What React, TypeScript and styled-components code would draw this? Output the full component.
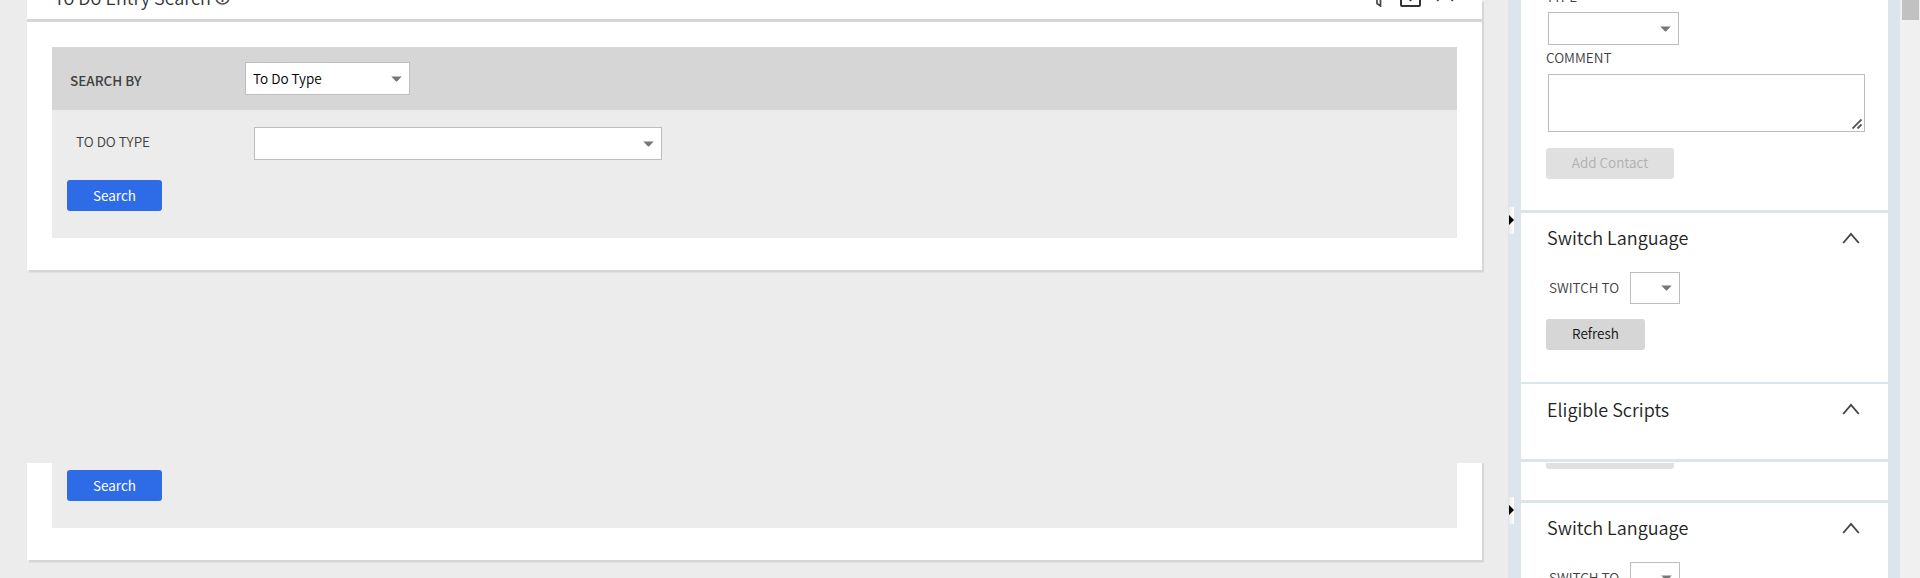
import React from "react";
import styled, { createGlobalStyle } from "styled-components";

const GlobalStyle = createGlobalStyle`
  * { box-sizing: border-box; }
  html, body { margin: 0; padding: 0; overflow: hidden; }
  body { background: #ececec; font-family: "Noto Sans CJK SC", "Noto Sans", sans-serif; font-weight: 350; color: #333; }
`;

const Page = styled.div`
  width: 1920px;
  height: 578px;
  display: flex;
  overflow: hidden;
`;

const Columns = styled.div`
  width: 1900px;
  display: flex;
  flex-direction: column;
`;

const Band = styled.div<{ $height: number }>`
  height: ${(p) => p.$height}px;
  flex: none;
  display: flex;
  overflow: hidden;
`;

const Scrolled = styled.div<{ $by: number }>`
  margin-top: -${(p) => p.$by}px;
  height: 463px;
  display: flex;
  flex: none;
`;

const Main = styled.main`
  width: 1508px;
  padding: 0 26px 0 27px;
  background: #ececec;
`;

const Card = styled.section`
  width: 1455px;
  height: 270px;
  background: #fff;
  box-shadow: 2px 2px 0 #d6d6d6, 2px 3px 0 #e2e2e2;
  display: flex;
  flex-direction: column;
`;

const CardHeader = styled.header`
  height: 22px;
  border-bottom: 3px solid #d6d6d6;
  padding: 0 28px 0 27px;
  display: flex;
  align-items: flex-start;
  overflow: hidden;
`;

const CardTitle = styled.div`
  font-size: 18px;
  line-height: 24px;
  margin-top: -15px;
  white-space: nowrap;
`;

const Glyph = styled.svg<{ $left?: number; $top?: number }>`
  display: block;
  flex: none;
  margin-left: ${(p) => p.$left ?? 0}px;
  margin-top: ${(p) => p.$top ?? 0}px;
`;

const HeaderTools = styled.div`
  margin-left: auto;
  display: flex;
`;

const Panel = styled.div`
  margin: 25px 25px 0;
  width: 1405px;
  background: #ececec;
  height: 191px;
`;

const SearchBar = styled.div`
  height: 63px;
  background: #d6d6d6;
  display: flex;
  align-items: flex-start;
  padding: 15px 0 0 18px;
`;

const FieldRow = styled.div`
  display: flex;
  align-items: flex-start;
  padding: 17px 0 0 24px;
  height: 70px;
`;

const Label = styled.label<{ $width?: number; $top?: number; $bold?: boolean }>`
  width: ${(p) => (p.$width ? `${p.$width}px` : "auto")};
  margin-top: ${(p) => p.$top ?? 0}px;
  font-size: 13.5px;
  line-height: 18px;
  font-weight: ${(p) => (p.$bold ? 500 : 350)};
  color: #404040;
  white-space: nowrap;
  flex: none;
`;

const SelectBox = styled.div<{ $width: number; $height?: number }>`
  width: ${(p) => p.$width}px;
  height: ${(p) => p.$height ?? 33}px;
  border: 1px solid #bdbdbd;
  background: #fff;
  display: flex;
  align-items: center;
  justify-content: space-between;
  padding: 0 7px;
  flex: none;
`;

const SelectValue = styled.span`
  font-size: 13.5px;
  line-height: 18px;
  padding-bottom: 2px;
  color: #000;
`;

const Button = styled.button<{ $width: number; $tone: "primary" | "plain" | "disabled" }>`
  display: flex;
  justify-content: center;
  width: ${(p) => p.$width}px;
  height: 31px;
  flex: none;
  border: 0;
  border-radius: 3px;
  padding: 0;
  font-family: inherit;
  font-size: 13.5px;
  line-height: ${(p) => (p.$tone === "primary" ? 31 : 29)}px;
  font-weight: ${(p) => (p.$tone === "primary" ? 400 : 350)};
  color: ${(p) => ({ primary: "#fff", plain: "#111", disabled: "#b0b0b0" })[p.$tone]};
  background: ${(p) => ({ primary: "#2e6be6", plain: "#d6d6d6", disabled: "#e0e0e0" })[p.$tone]};
`;

const PanelAction = styled.div`
  padding-left: 15px;
`;

const Splitter = styled.div`
  width: 13px;
  background: #dce5eb;
  padding: 207px 0 0 1px;
`;

const Handle = styled.div`
  width: 5px;
  height: 27px;
  background: linear-gradient(90deg, #ecebe4, #fff);
  padding-top: 8px;
`;

const Sidebar = styled.aside`
  width: 379px;
  border-right: 12px solid #dce5eb;
  background: #fff;
`;

const Zone = styled.section<{ $height: number; $line: number }>`
  height: ${(p) => p.$height}px;
  border-bottom: ${(p) => p.$line}px solid #dce6ea;
  padding-left: 25px;
  display: flex;
  flex-direction: column;
  align-items: flex-start;
`;

const TypeLabel = styled(Label)`
  margin-top: -13px;
  height: 18px;
`;

const CommentBox = styled.div`
  width: 317px;
  height: 58px;
  margin: 8px 0 16px 2px;
  border: 1px solid #bdbdbd;
  display: flex;
  align-items: flex-end;
  justify-content: flex-end;
  padding: 2px;
`;

const Indent = styled.div<{ $top: number }>`
  margin: ${(p) => p.$top}px 0 0 2px;
`;

const ZoneHeader = styled.div<{ $top: number }>`
  width: 100%;
  display: flex;
  justify-content: space-between;
  align-items: flex-start;
  padding: ${(p) => p.$top}px 28px 0 1px;
  height: 59px;
`;

const ZoneTitle = styled.h2`
  margin: 0;
  font-size: 18px;
  font-weight: 350;
  line-height: 24px;
  color: #222;
`;

const SwitchRow = styled.div`
  display: flex;
  padding-left: 3px;
  margin-bottom: 15px;
`;

const ScrollTrack = styled.div`
  width: 20px;
  background: #f0f0f0;
  padding-left: 2px;
`;

const ScrollThumb = styled.div`
  width: 17px;
  height: 20px;
  background: #c1c1c1;
`;

const Caret = () => (
  <Glyph width="11" height="6" viewBox="0 0 11 6">
    <path d="M0.3 0.5h10.4L6.2 5.3q-.7.6-1.4 0z" fill="#757779" />
  </Glyph>
);

const Chevron = ({ top = 6 }: { top?: number }) => (
  <Glyph width="18" height="12" viewBox="0 0 18 12" $top={top}>
    <path d="M1.2 11L9 2l7.8 9" fill="none" stroke="#444" strokeWidth="1.9" />
  </Glyph>
);

const MainContent = () => (
  <Main>
    <Card>
      <CardHeader>
        <CardTitle>To Do Entry Search</CardTitle>
        <Glyph width="15" height="15" viewBox="0 0 15 15" $left={4} $top={-10}>
          <circle cx="7.5" cy="7.5" r="6.5" fill="none" stroke="#555" strokeWidth="1.7" />
          <path d="M7.5 3v9" stroke="#555" strokeWidth="2" />
        </Glyph>
        <HeaderTools>
          <Glyph width="16" height="19" viewBox="0 0 16 19" $top={-12}>
            <path d="M0.500 1h15l-4 8v9L8 15.500V9z" fill="none" stroke="#444" strokeWidth="1.700" />
          </Glyph>
          <Glyph width="21" height="21" viewBox="0 0 21 21" $left={15} $top={-14}>
            <rect x="1" y="1" width="19" height="19" rx="1" fill="none" stroke="#333" strokeWidth="2" />
            <path d="M10.5 4v10M7 11l3.5 3.5L14 11" fill="none" stroke="#333" strokeWidth="1.5" />
          </Glyph>
          <Glyph width="18" height="12" viewBox="0 0 18 12" $left={15} $top={-10}>
            <path d="M1.2 11L9 2l7.8 9" fill="none" stroke="#444" strokeWidth="1.8" />
          </Glyph>
        </HeaderTools>
      </CardHeader>
      <Panel>
        <SearchBar>
          <Label $bold $width={175} $top={9}>SEARCH BY</Label>
          <SelectBox $width={165}>
            <SelectValue>To Do Type</SelectValue>
            <Caret />
          </SelectBox>
        </SearchBar>
        <FieldRow>
          <Label $width={178} $top={5}>TO DO TYPE</Label>
          <SelectBox $width={408}>
            <SelectValue />
            <Caret />
          </SelectBox>
        </FieldRow>
        <PanelAction>
          <Button $width={95} $tone="primary">Search</Button>
        </PanelAction>
      </Panel>
    </Card>
  </Main>
);

const SideContent = () => (
  <Sidebar>
    <Zone $height={213} $line={3}>
      <TypeLabel>TYPE</TypeLabel>
      <Indent $top={7}>
        <SelectBox $width={131}>
          <SelectValue />
          <Caret />
        </SelectBox>
      </Indent>
      <Label $top={3}>COMMENT</Label>
      <CommentBox>
        <Glyph width="10" height="10" viewBox="0 0 10 10">
          <path d="M0.5 9.5l9-9M5.5 9.5l4-4" stroke="#555" strokeWidth="1.9" />
        </Glyph>
      </CommentBox>
      <Button $width={128} $tone="disabled">Add Contact</Button>
    </Zone>
    <Zone $height={171} $line={2}>
      <ZoneHeader $top={12}>
        <ZoneTitle>Switch Language</ZoneTitle>
        <Chevron top={7} />
      </ZoneHeader>
      <SwitchRow>
        <Label $width={81} $top={6}>SWITCH TO</Label>
        <SelectBox $width={50} $height={32}>
          <SelectValue />
          <Caret />
        </SelectBox>
      </SwitchRow>
      <Button $width={99} $tone="plain">Refresh</Button>
    </Zone>
    <Zone $height={78} $line={3}>
      <ZoneHeader $top={13}>
        <ZoneTitle>Eligible Scripts</ZoneTitle>
        <Chevron />
      </ZoneHeader>
    </Zone>
  </Sidebar>
);

const View = ({ height, scroll }: { height: number; scroll: number }) => (
  <Band $height={height}>
    <Scrolled $by={scroll}>
      <MainContent />
      <Splitter>
        <Handle>
          <Glyph width="5" height="10" viewBox="0 0 5 10">
            <path d="M0 0l5 5-5 5z" fill="#000" />
          </Glyph>
        </Handle>
      </Splitter>
      <SideContent />
    </Scrolled>
  </Band>
);

export default function App() {
  return (
    <Page>
      <GlobalStyle />
      <Columns>
        <View height={463} scroll={0} />
        <View height={115} scroll={173} />
      </Columns>
      <ScrollTrack>
        <ScrollThumb />
      </ScrollTrack>
    </Page>
  );
}
